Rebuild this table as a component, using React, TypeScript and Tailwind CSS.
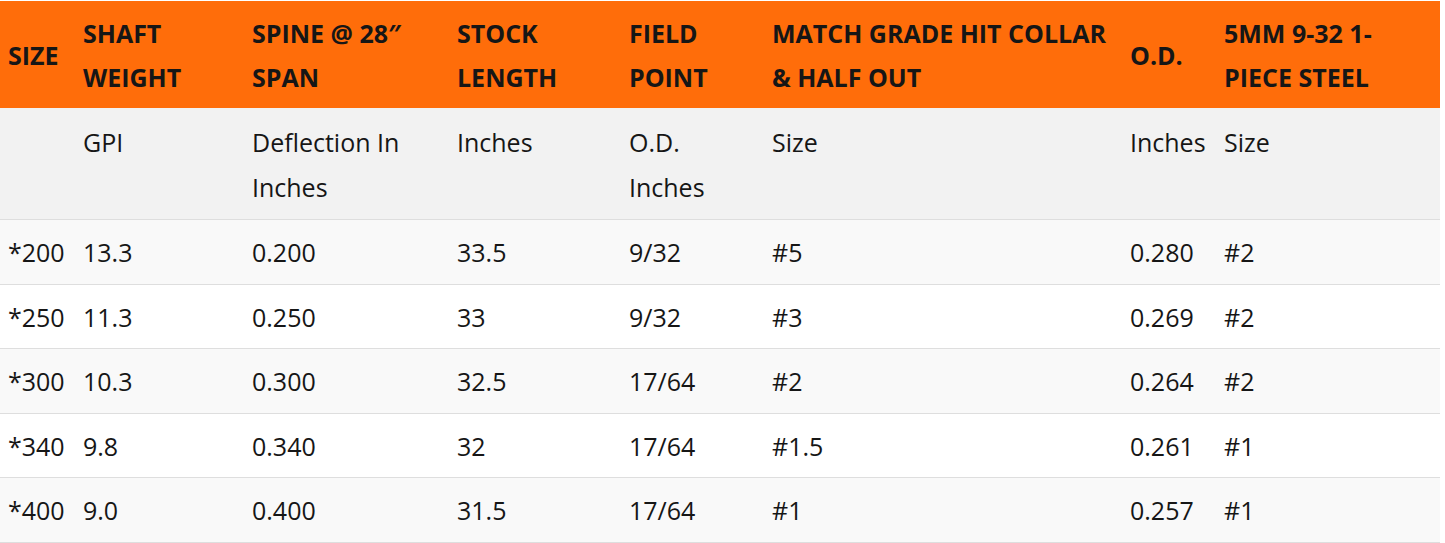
import React from "react";

const headers = [
  "SIZE",
  "SHAFT WEIGHT",
  "SPINE @ 28\u2033 SPAN",
  "STOCK LENGTH",
  "FIELD POINT",
  "MATCH GRADE HIT COLLAR & HALF OUT",
  "O.D.",
  "5MM 9-32 1-PIECE STEEL",
];

const sub = ["", "GPI", "Deflection In Inches", "Inches", "O.D. Inches", "Size", "Inches", "Size"];

const rows = [
  ["*200", "13.3", "0.200", "33.5", "9/32", "#5", "0.280", "#2"],
  ["*250", "11.3", "0.250", "33", "9/32", "#3", "0.269", "#2"],
  ["*300", "10.3", "0.300", "32.5", "17/64", "#2", "0.264", "#2"],
  ["*340", "9.8", "0.340", "32", "17/64", "#1.5", "0.261", "#1"],
  ["*400", "9.0", "0.400", "31.5", "17/64", "#1", "0.257", "#1"],
];

const widths = [75, 169, 205, 172, 143, 358, 94, 224];

export default function App() {
  return (
    <div className="w-[1445px] h-[543px] overflow-hidden bg-white pt-[1px] text-[#161616] [font-family:'Open_Sans',sans-serif]">
      <table className="w-[1440px] table-fixed border-collapse text-left text-[25px]">
        <colgroup>
          {widths.map((w, i) => (
            <col key={i} style={{ width: w }} />
          ))}
        </colgroup>
        <thead>
          <tr className="bg-[#ff6d0a]">
            {headers.map((h, i) => (
              <th
                key={i}
                className="pl-[8px] pr-[9px] pt-[9.5px] pb-[9.5px] align-middle font-bold leading-[44px] text-[#161616]"
              >
                {h}
              </th>
            ))}
          </tr>
        </thead>
        <tbody>
          <tr className="bg-[#f2f2f2] border-b border-[#dedede]">
            {sub.map((s, i) => (
              <td key={i} className="pl-[8px] pr-[9px] pt-[12px] pb-[9px] align-top leading-[45px]">
                {s}
              </td>
            ))}
          </tr>
          {rows.map((r, ri) => (
            <tr
              key={ri}
              className={`border-b border-[#dedede] ${ri % 2 === 0 ? "bg-[#f9f9f9]" : "bg-white"}`}
            >
              {r.map((c, ci) => (
                <td key={ci} className="pl-[8px] pr-[9px] pt-[10px] pb-[8.6px] align-top leading-[45px] whitespace-nowrap">
                  {c}
                </td>
              ))}
            </tr>
          ))}
        </tbody>
      </table>
    </div>
  );
}
